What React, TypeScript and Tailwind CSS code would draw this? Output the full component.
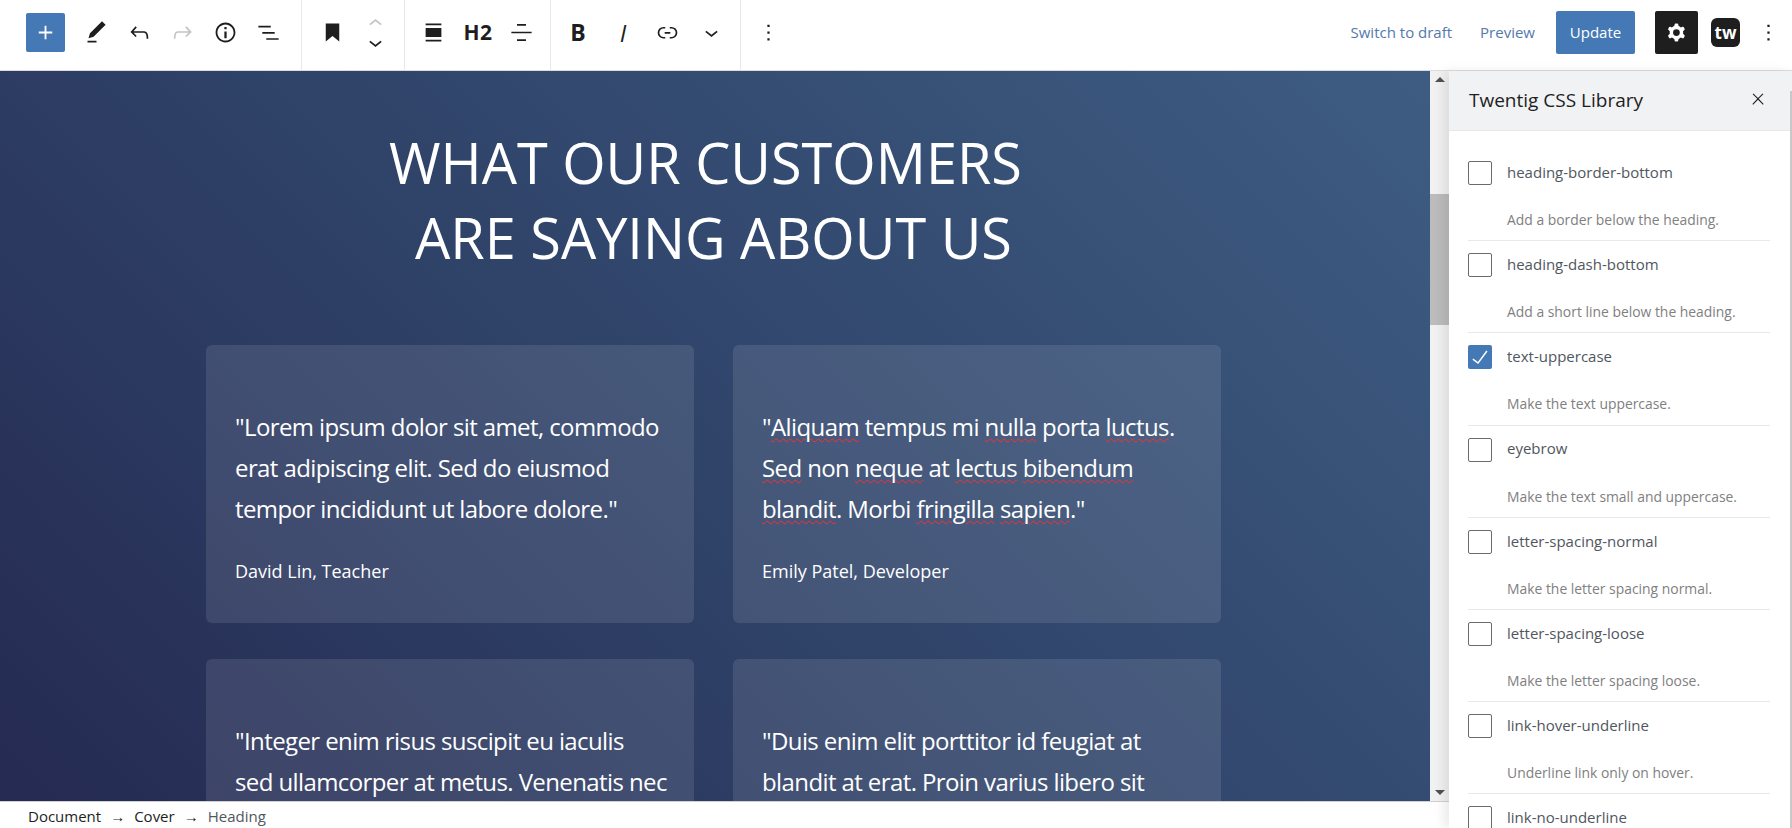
import type { ReactNode } from 'react';

const CSS_OPTIONS: { name: string; hint?: string; checked?: boolean }[] = [
  { name: 'heading-border-bottom', hint: 'Add a border below the heading.' },
  { name: 'heading-dash-bottom', hint: 'Add a short line below the heading.' },
  { name: 'text-uppercase', hint: 'Make the text uppercase.', checked: true },
  { name: 'eyebrow', hint: 'Make the text small and uppercase.' },
  { name: 'letter-spacing-normal', hint: 'Make the letter spacing normal.' },
  { name: 'letter-spacing-loose', hint: 'Make the letter spacing loose.' },
  { name: 'link-hover-underline', hint: 'Underline link only on hover.' },
  { name: 'link-no-underline' },
];

function Sp({ children }: { children: ReactNode }) {
  return (
    <span className="underline decoration-[#ff2d2d] decoration-wavy decoration-1 underline-offset-[2px]">
      {children}
    </span>
  );
}

const QUOTES: { lines: ReactNode[]; author?: string }[] = [
  {
    lines: ['"Lorem ipsum dolor sit amet, commodo', 'erat adipiscing elit. Sed do eiusmod', 'tempor incididunt ut labore dolore."'],
    author: 'David Lin, Teacher',
  },
  {
    lines: [
      <>"<Sp>Aliquam</Sp> tempus mi <Sp>nulla</Sp> porta <Sp>luctus</Sp>.</>,
      <><Sp>Sed</Sp> non <Sp>neque</Sp> at <Sp>lectus</Sp> <Sp>bibendum</Sp></>,
      <><Sp>blandit</Sp>. Morbi <Sp>fringilla</Sp> <Sp>sapien</Sp>."</>,
    ],
    author: 'Emily Patel, Developer',
  },
  { lines: ['"Integer enim risus suscipit eu iaculis', 'sed ullamcorper at metus. Venenatis nec'] },
  { lines: ['"Duis enim elit porttitor id feugiat at', 'blandit at erat. Proin varius libero sit'] },
];

function Icon({ d, className = 'h-[27px] w-[27px] fill-[#1e1e1e]' }: { d: string; className?: string }) {
  return (
    <svg viewBox="0 0 24 24" className={className} aria-hidden="true">
      <path d={d} fillRule="evenodd" clipRule="evenodd" />
    </svg>
  );
}

function ToolButton({ children, w = 'w-[43px]' }: { children: ReactNode; w?: string }) {
  return <div className={`flex h-full shrink-0 items-center justify-center ${w}`}>{children}</div>;
}

function Toolbar() {
  return (
    <header className="flex h-[71px] shrink-0 items-stretch border-b border-[#dcdcde] bg-white">
      <div className="flex items-center border-r border-[#e8e8e8] pb-[5px] pl-[26px] pr-[11px]">
        <div className="mr-[10px] flex h-[39px] w-[39px] items-center justify-center rounded-[2px] bg-[#4479b5]">
          <Icon d="M18 11.2h-5.2V6h-1.6v5.2H6v1.6h5.2V18h1.6v-5.2H18z" className="h-[27px] w-[27px] fill-white" />
        </div>
        <ToolButton><Icon d="M20.1 5.1L16.9 2 6.2 12.7l-1.3 4.4 4.5-1.3L20.1 5.1zM4 20.8h8v-1.5H4v1.5z" /></ToolButton>
        <ToolButton><Icon d="M18.3 11.7c-.6-.6-1.4-.9-2.3-.9H6.7l2.9-3.3-1.1-1-4.5 5L8.5 16l1-1-2.7-2.7H16c.5 0 .9.2 1.3.5 1 1 1 3.4 1 4.5v.3h1.5v-.2c0-1.5 0-4.3-1.5-5.7z" /></ToolButton>
        <ToolButton><Icon d="M15.6 6.5l-1.1 1 2.9 3.3H8c-.9 0-1.7.3-2.3.9-1.4 1.5-1.4 4.2-1.4 5.6v.2h1.5v-.3c0-1.1 0-3.5 1-4.5.3-.3.7-.5 1.3-.5h9.2L14.5 15l1.1 1.1 4.6-4.6-4.6-5z" className="h-[27px] w-[27px] fill-[#c4c4c4]" /></ToolButton>
        <ToolButton><Icon d="M12 3.2c-4.8 0-8.8 3.9-8.8 8.8 0 4.8 3.9 8.8 8.8 8.8 4.8 0 8.8-3.9 8.8-8.8 0-4.8-4-8.8-8.8-8.8zm0 16c-4 0-7.2-3.3-7.2-7.2C4.8 8 8 4.8 12 4.8s7.2 3.3 7.2 7.2c0 4-3.2 7.2-7.2 7.2zM11 17h2v-6h-2v6zm0-8h2V7h-2v2z" /></ToolButton>
        <ToolButton><Icon d="M3 6h11v1.5H3V6zm3.5 5.5h11V13h-11v-1.5zM21 17H10v1.5h11V17z" /></ToolButton>
      </div>
      <div className="flex items-center border-r border-[#e8e8e8] pb-[5px] pl-[8px] pr-[7px]">
        <ToolButton w="w-[44px]"><Icon d="M6 4h12v16l-6-4.8L6 20V4z" /></ToolButton>
        <div className="flex w-[43px] flex-col items-center">
          <Icon d="M6.5 12.4L12 8l5.5 4.4-.9 1.2L12 10l-4.5 3.6-1-1.2z" className="h-[27px] w-[27px] fill-[#c4c4c4]" />
          <Icon d="M17.5 11.6L12 16l-5.5-4.4.9-1.2L12 14l4.5-3.6 1 1.2z" className="-mt-[8px] h-[27px] w-[27px] fill-[#1e1e1e]" />
        </div>
      </div>
      <div className="flex items-center border-r border-[#e8e8e8] pb-[5px] pl-[7px] pr-[8px]">
        <ToolButton><Icon d="M5 4h14v1.5H5V4zm0 14.5h14V20H5v-1.5zM5 8h14v8H5V8z" /></ToolButton>
        <ToolButton w="w-[46px]">
          <span className="text-[21px] font-bold tracking-[0.5px] text-[#1e1e1e]">H2</span>
        </ToolButton>
        <ToolButton w="w-[41px]"><Icon d="M8 4.5h8V6H8V4.5zM3 11.25h18v1.5H3v-1.5zM8 18h8v1.5H8V18z" /></ToolButton>
      </div>
      <div className="flex items-center border-r border-[#e8e8e8] pb-[5px] pl-[5px] pr-[6px]">
        <ToolButton w="w-[44px]">
          <span className="text-[23px] font-bold text-[#1e1e1e]">B</span>
        </ToolButton>
        <ToolButton w="w-[46px]">
          <span className="text-[24px] italic text-[#1e1e1e]">I</span>
        </ToolButton>
        <ToolButton w="w-[42px]"><Icon d="M10 17.389H8.444A5.194 5.194 0 1 1 8.444 7H10v1.5H8.444a3.694 3.694 0 0 0 0 7.389H10v1.5ZM14 7h1.556a5.194 5.194 0 0 1 0 10.39H14v-1.5h1.556a3.694 3.694 0 0 0 0-7.39H14V7Zm-4.5 6h5v-1.5h-5V13Z" /></ToolButton>
        <ToolButton w="w-[46px]"><Icon d="M17.5 11.6L12 16l-5.5-4.4.9-1.2L12 14l4.5-3.6 1 1.2z" /></ToolButton>
      </div>
      <div className="flex items-center pb-[5px] pl-[6px]">
        <ToolButton><Icon d="M13 19h-2v-2h2v2zm0-6h-2v-2h2v2zm0-6h-2V5h2v2z" /></ToolButton>
      </div>

      <div className="ml-auto flex items-center pb-[5px] pr-[2px]">
        <span className="mr-[28px] text-[15px] text-[#5479ab]">Switch to draft</span>
        <span className="mr-[21px] text-[15px] text-[#5479ab]">Preview</span>
        <div className="mr-[20px] flex h-[43px] w-[79px] items-center justify-center rounded-[2px] bg-[#4479b5] text-[15px] text-white">
          Update
        </div>
        <div className="mr-[13px] flex h-[43px] w-[43px] items-center justify-center rounded-[2px] bg-[#1e1e1e]">
          <Icon
            d="M10.289 4.836A1 1 0 0111.275 4h1.306a1 1 0 01.987.836l.244 1.466c.787.26 1.503.679 2.108 1.218l1.393-.522a1 1 0 011.216.437l.653 1.13a1 1 0 01-.23 1.273l-1.148.944a6.025 6.025 0 010 2.435l1.149.946a1 1 0 01.23 1.272l-.653 1.13a1 1 0 01-1.216.437l-1.394-.522c-.605.54-1.32.958-2.108 1.218l-.244 1.466a1 1 0 01-.987.836h-1.306a1 1 0 01-.986-.836l-.244-1.466a5.995 5.995 0 01-2.108-1.218l-1.394.522a1 1 0 01-1.217-.436l-.653-1.131a1 1 0 01.23-1.272l1.149-.946a6.026 6.026 0 010-2.435l-1.148-.944a1 1 0 01-.23-1.272l.653-1.131a1 1 0 011.217-.437l1.393.522a5.994 5.994 0 012.108-1.218l.244-1.466zM14.929 12a3 3 0 11-6 0 3 3 0 016 0z"
            className="h-[27px] w-[27px] fill-white"
          />
        </div>
        <div className="mr-[7px] flex h-[29px] w-[29px] items-center justify-center rounded-[6px] bg-[#1e1e1e] text-[17px] font-bold leading-none text-white">
          tw
        </div>
        <ToolButton><Icon d="M13 19h-2v-2h2v2zm0-6h-2v-2h2v2zm0-6h-2V5h2v2z" /></ToolButton>
      </div>
    </header>
  );
}

function QuoteCard({ lines, author }: { lines: ReactNode[]; author?: string }) {
  return (
    <div className="whitespace-nowrap rounded-[6px] bg-white/10 pb-[38px] pl-[29px] pr-[20px] pt-[61px] text-white">
      <p className="text-[24px] leading-[41px] tracking-[-0.6px]">
        {lines.map((line, i) => (
          <span key={i} className="block">{line}</span>
        ))}
      </p>
      {author && <p className="mt-[29px] text-[18px] leading-[27px]">{author}</p>}
    </div>
  );
}

function Canvas() {
  return (
    <main className="min-w-0 flex-1 overflow-hidden bg-[linear-gradient(45deg,#252a52_0%,#2f4268_45%,#3e5c82_100%)] pr-[3px] pt-[54px]">
      <h1 className="text-center text-[55.8px] font-normal leading-[75px] text-white">
        <span className="block pr-[16px]">WHAT OUR CUSTOMERS</span>
        <span className="block">ARE SAYING ABOUT US</span>
      </h1>
      <div className="ml-[206px] mt-[70px] grid w-[1015px] grid-cols-2 gap-x-[39px] gap-y-[36px]">
        {QUOTES.map((q, i) => (
          <QuoteCard key={i} lines={q.lines} author={q.author} />
        ))}
      </div>
    </main>
  );
}

function Scrollbar() {
  return (
    <div className="flex w-[19px] shrink-0 flex-col items-center bg-[#f1f1f1]">
      <div className="mt-[6px] h-0 w-0 border-x-[5px] border-b-[5px] border-x-transparent border-b-[#505050]" />
      <div className="mt-[112px] h-[131px] w-full bg-[#bcbcbc]" />
      <div className="mb-[6px] mt-auto h-0 w-0 border-x-[5px] border-t-[5px] border-x-transparent border-t-[#505050]" />
    </div>
  );
}

function OptionRow({ name, hint, checked }: { name: string; hint?: string; checked?: boolean }) {
  return (
    <div className="h-[92.2px] border-b border-[#e8e8e8] pt-[12px]">
      <div className="flex items-center gap-[15px]">
        {checked ? (
          <div className="flex h-[24px] w-[24px] items-center justify-center rounded-[2px] bg-[#4479b5]">
            <svg viewBox="0 0 24 24" className="h-6 w-6 fill-white" aria-hidden="true">
              <path d="M18.3 5.6L9.9 16.9l-4.6-3.4-.9 1.2 5.8 4.3 9.3-12.6z" />
            </svg>
          </div>
        ) : (
          <div className="h-[24px] w-[24px] rounded-[2px] border border-[#6b6b6b] bg-white" />
        )}
        <span className="-mt-[2px] text-[15px] text-[#50575e]">{name}</span>
      </div>
      {hint && <p className="ml-[39px] mt-[25px] text-[13.9px] leading-[20px] text-[#808080]">{hint}</p>}
    </div>
  );
}

function Sidebar() {
  return (
    <aside className="relative flex w-[343px] shrink-0 flex-col overflow-hidden bg-white shadow-[-6px_0_10px_rgba(0,0,0,0.08)]">
      <div className="flex h-[60px] shrink-0 items-center justify-between border-b border-[#e8e8e8] bg-[#f1f2f4] pl-[20px] pr-[25px]">
        <h2 className="text-[19px] font-medium text-[#1e1e1e]">Twentig CSS Library</h2>
        <Icon d="M13 11.8l6.1-6.3-1-1-6.1 6.2-6.1-6.2-1 1 6.1 6.3-6.5 6.7 1 1 6.5-6.6 6.5 6.6 1-1z" className="-mt-[3px] h-[18px] w-[18px] fill-[#1e1e1e]" />
      </div>
      <div className="min-h-0 flex-1 overflow-hidden pl-[19px] pr-[22px] pt-[18px]">
        {CSS_OPTIONS.map((o) => (
          <OptionRow key={o.name} {...o} />
        ))}
      </div>
      <div className="absolute bottom-0 right-0 top-[20px] w-[2px] bg-[#c8c8c8]" />
    </aside>
  );
}

export default function App() {
  return (
    <div className="flex h-screen w-full flex-col overflow-hidden bg-white font-['Open_Sans','Noto_Sans',sans-serif]">
      <Toolbar />
      <div className="flex min-h-0 flex-1">
        <div className="flex min-w-0 flex-1 flex-col">
          <div className="flex min-h-0 flex-1">
            <Canvas />
            <Scrollbar />
          </div>
          <footer className="flex h-[27px] shrink-0 items-center gap-[9px] border-t border-[#d0d0d0] bg-white pl-[28px] pt-[3px] text-[15px] text-[#1e1e1e]">
            <span>Document</span>
            <span>→</span>
            <span>Cover</span>
            <span>→</span>
            <span className="text-[#50575e]">Heading</span>
          </footer>
        </div>
        <Sidebar />
      </div>
    </div>
  );
}
